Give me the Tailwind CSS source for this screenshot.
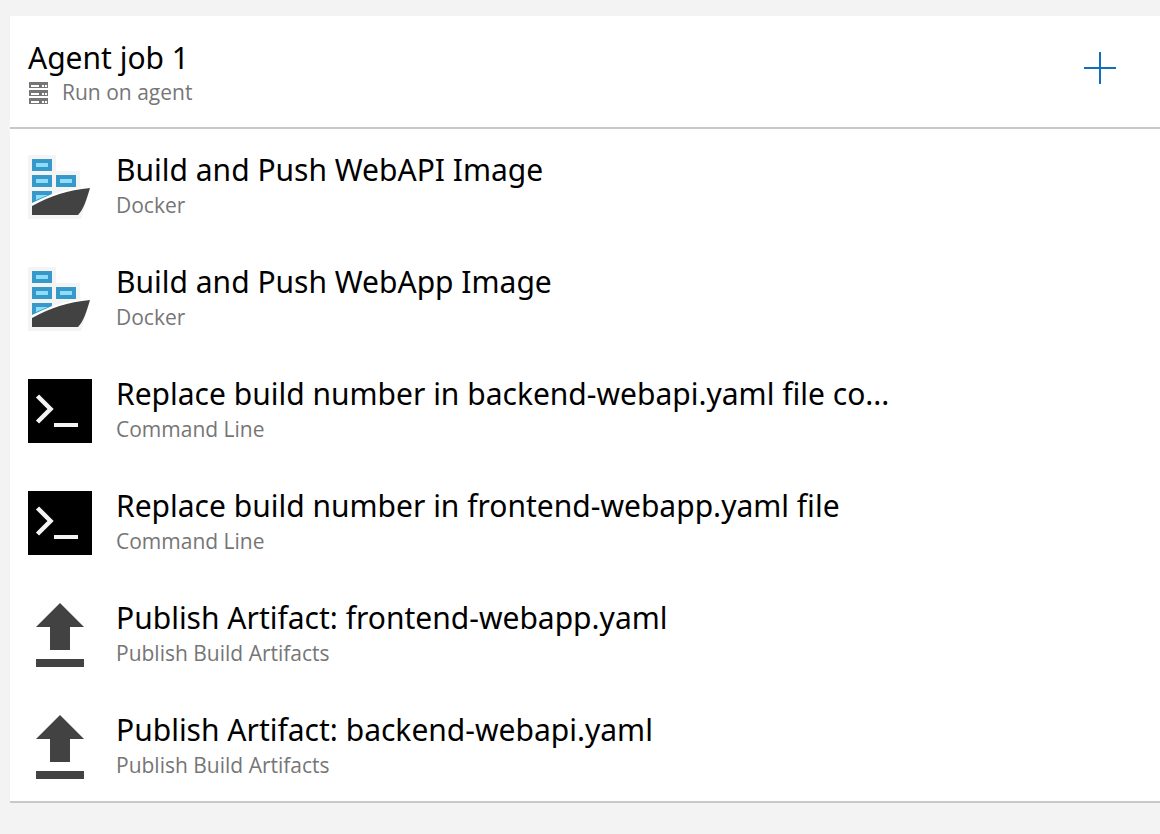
<!DOCTYPE html>
<html lang="en">
<head>
<meta charset="utf-8">
<meta name="viewport" content="width=device-width, initial-scale=1">
<title>Agent job 1</title>
<script src="https://cdn.jsdelivr.net/npm/@tailwindcss/browser@4"></script>
</head>
<body class="min-h-screen bg-[#f3f3f3] pt-4 pl-[10px] font-['Open_Sans','Noto_Sans',sans-serif] text-black">
<svg class="hidden" aria-hidden="true">
  <symbol id="docker" viewBox="0 0 64 64">
    <path fill="#f4f4f4" d="M0 0h28v16h24v16l11-1-10 33H0z"/>
    <path fill="#3799c9" d="M4 4h20v12H4zM4 20h20v12H4zM28 20h20v12H28zM4 36h20v3L4 48z"/>
    <path fill="#8ddff9" d="M8 8h12v4H8zM8 24h12v4H8zM32 24h12v4H32zM8 40h12l-12 5z"/>
    <path fill="#fff" d="M3 49C20 40 38 33 63 31l-1 3L4 54z"/>
    <path fill="#424242" d="M4 51C22 41 40 35 62 33C59 43 56 54 50 60H4z"/>
  </symbol>
  <symbol id="cmd" viewBox="0 0 64 64">
    <path fill="#000" d="M0 0h64v64H0z"/>
    <path fill="none" stroke="#f4f4f4" stroke-width="4.5" d="M9.500 17l13 13-13 13"/>
    <path fill="none" stroke="#f4f4f4" stroke-width="4" d="M26 46h24"/>
  </symbol>
  <symbol id="publish" viewBox="0 0 64 64">
    <path fill="#424242" d="M32 0l24 24H42v23H22V24H8zM8 56h48v8H8z"/>
  </symbol>
</svg>
<main class="border-b-2 border-[#c8c8c8] bg-white">
  <header class="flex items-center justify-between border-b-2 border-[#c8c8c8] pt-[22px] pr-11 pb-[21px] pl-[18px]">
    <div>
      <h1 class="font-['Noto_Sans',sans-serif] text-[30px] leading-10">Agent job 1</h1>
      <p class="flex items-center gap-[13px] text-[21px] leading-7 text-[#767676]">
        <svg class="h-6 w-[21px] shrink-0" viewBox="0 0 21 24" shape-rendering="crispEdges" aria-hidden="true">
          <path fill="#767676" d="M1 2h19v6H1zM1 10h19v6H1zM1 18h19v6H1z"/>
          <path fill="#fff" d="M3 5h8v2H3zM14 5h2v2h-2zM17 5h2v2h-2zM3 13h8v2H3zM14 13h2v2h-2zM17 13h2v2h-2zM3 21h8v2H3zM14 21h2v2h-2zM17 21h2v2h-2z"/>
        </svg>
        <span>Run on agent</span>
      </p>
    </div>
    <button type="button" aria-label="Add a task to Agent job 1" class="mb-2 text-[#106ebe]">
      <svg class="block size-8" viewBox="0 0 32 32" shape-rendering="crispEdges" aria-hidden="true"><path fill="currentColor" d="M0 15h32v2H0zM15 0h2v32h-2z"/></svg>
    </button>
  </header>
  <ul>
    <li class="flex h-28 items-center gap-6 pr-11 pl-[18px]">
      <svg class="mt-1 size-16 shrink-0" aria-hidden="true"><use href="#docker"/></svg>
      <div class="min-w-0"><h2 class="truncate font-['Noto_Sans',sans-serif] text-[30px] leading-10">Build and Push WebAPI Image</h2><p class="text-[21px] leading-[30px] text-[#767676]">Docker</p></div>
    </li>
    <li class="flex h-28 items-center gap-6 pr-11 pl-[18px]">
      <svg class="mt-1 size-16 shrink-0" aria-hidden="true"><use href="#docker"/></svg>
      <div class="min-w-0"><h2 class="truncate font-['Noto_Sans',sans-serif] text-[30px] leading-10">Build and Push WebApp Image</h2><p class="text-[21px] leading-[30px] text-[#767676]">Docker</p></div>
    </li>
    <li class="flex h-28 items-center gap-6 pr-11 pl-[18px]">
      <svg class="mt-1 size-16 shrink-0" aria-hidden="true"><use href="#cmd"/></svg>
      <div class="min-w-0"><h2 class="truncate font-['Noto_Sans',sans-serif] text-[30px] leading-10">Replace build number in backend-webapi.yaml file co...</h2><p class="text-[21px] leading-[30px] text-[#767676]">Command Line</p></div>
    </li>
    <li class="flex h-28 items-center gap-6 pr-11 pl-[18px]">
      <svg class="mt-1 size-16 shrink-0" aria-hidden="true"><use href="#cmd"/></svg>
      <div class="min-w-0"><h2 class="truncate font-['Noto_Sans',sans-serif] text-[30px] leading-10">Replace build number in frontend-webapp.yaml file</h2><p class="text-[21px] leading-[30px] text-[#767676]">Command Line</p></div>
    </li>
    <li class="flex h-28 items-center gap-6 pr-11 pl-[18px]">
      <svg class="mt-1 size-16 shrink-0" aria-hidden="true"><use href="#publish"/></svg>
      <div class="min-w-0"><h2 class="truncate font-['Noto_Sans',sans-serif] text-[30px] leading-10">Publish Artifact: frontend-webapp.yaml</h2><p class="text-[21px] leading-[30px] text-[#767676]">Publish Build Artifacts</p></div>
    </li>
    <li class="flex h-28 items-center gap-6 pr-11 pl-[18px]">
      <svg class="mt-1 size-16 shrink-0" aria-hidden="true"><use href="#publish"/></svg>
      <div class="min-w-0"><h2 class="truncate font-['Noto_Sans',sans-serif] text-[30px] leading-10">Publish Artifact: backend-webapi.yaml</h2><p class="text-[21px] leading-[30px] text-[#767676]">Publish Build Artifacts</p></div>
    </li>
  </ul>
</main>
</body>
</html>
